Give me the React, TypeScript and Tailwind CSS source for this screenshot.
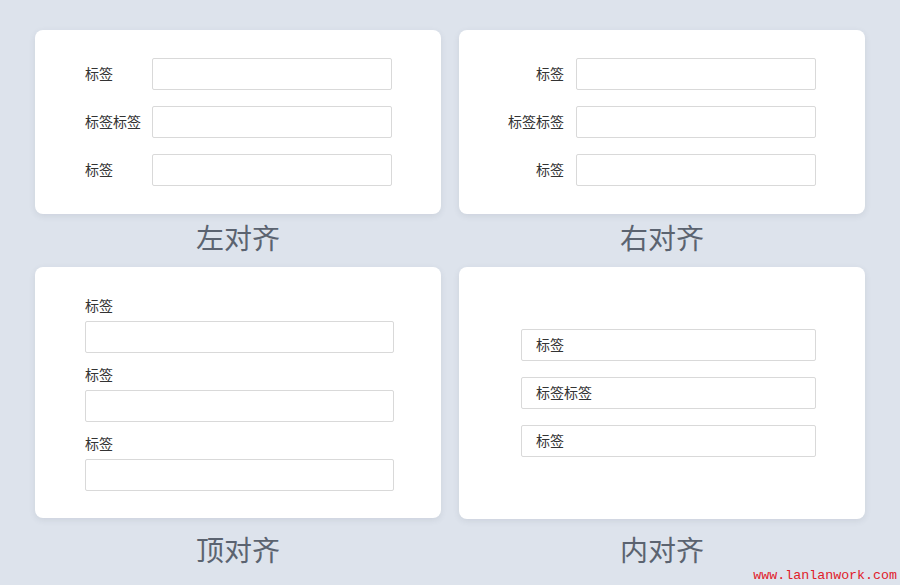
const cjk = "font-['Noto_Sans_CJK_SC','Noto_Sans',sans-serif]";

function Input({ children }: { children?: React.ReactNode }) {
  return (
    <div className="flex h-8 items-center rounded-[2px] border border-[#d9d9d9] bg-white px-[14px] text-sm text-[#333]">
      <span className="mb-[2px]">{children}</span>
    </div>
  );
}

function Title({ text, className }: { text: string; className?: string }) {
  return (
    <div className={`h-9 text-center text-[28px] leading-9 text-[#5b6370] ${className ?? ""}`}>{text}</div>
  );
}

const card = "rounded-lg bg-white shadow-[0_2px_6px_rgba(60,70,90,0.10)]";

export default function App() {
  const rows = ["标签", "标签标签", "标签"];

  return (
    <div className={`relative h-[585px] w-[900px] overflow-hidden bg-[#dde3ec] ${cjk}`}>
      <div className="grid grid-cols-2 gap-x-[18px] px-[35px] pt-[30px]">
        {/* left aligned */}
        <div className="flex flex-col">
          <div className={`${card} flex flex-col gap-4 py-[28px] pl-[50px]`}>
            {rows.map((r, i) => (
              <div key={i} className="flex items-center">
                <span className="mb-[2px] w-[56px] text-sm text-[#333]">{r}</span>
                <div className="ml-[11px] w-[240px]">
                  <Input />
                </div>
              </div>
            ))}
          </div>
          <Title text="左对齐" className="mt-[5px]" />
        </div>

        {/* right aligned */}
        <div className="flex flex-col">
          <div className={`${card} flex flex-col gap-4 py-[28px] pl-[49px]`}>
            {rows.map((r, i) => (
              <div key={i} className="flex items-center">
                <span className="mb-[2px] w-[56px] text-right text-sm text-[#333]">{r}</span>
                <div className="ml-3 w-[240px]">
                  <Input />
                </div>
              </div>
            ))}
          </div>
          <Title text="右对齐" className="mt-[5px]" />
        </div>

        {/* top aligned */}
        <div className="mt-[12px] flex flex-col">
          <div className={`${card} flex flex-col gap-3 pb-[27px] pl-[50px] pt-[29px]`}>
            {["标签", "标签", "标签"].map((r, i) => (
              <div key={i} className="flex flex-col gap-[5px]">
                <span className="h-5 text-sm leading-[18px] text-[#333]">{r}</span>
                <div className="w-[309px]">
                  <Input />
                </div>
              </div>
            ))}
          </div>
          <Title text="顶对齐" className="mt-[13px]" />
        </div>

        {/* inner aligned */}
        <div className="mt-[12px] flex flex-col">
          <div className={`${card} flex h-[252px] flex-col justify-center gap-4 pl-[62px]`}>
            {rows.map((r, i) => (
              <div key={i} className="w-[295px]">
                <Input>{r}</Input>
              </div>
            ))}
          </div>
          <Title text="内对齐" className="mt-[12px]" />
        </div>
      </div>

      <div className="absolute bottom-[1px] right-[3px] font-['Liberation_Mono',monospace] text-[13.3px] leading-4 text-[#e0202a]">
        www.lanlanwork.com
      </div>
    </div>
  );
}
